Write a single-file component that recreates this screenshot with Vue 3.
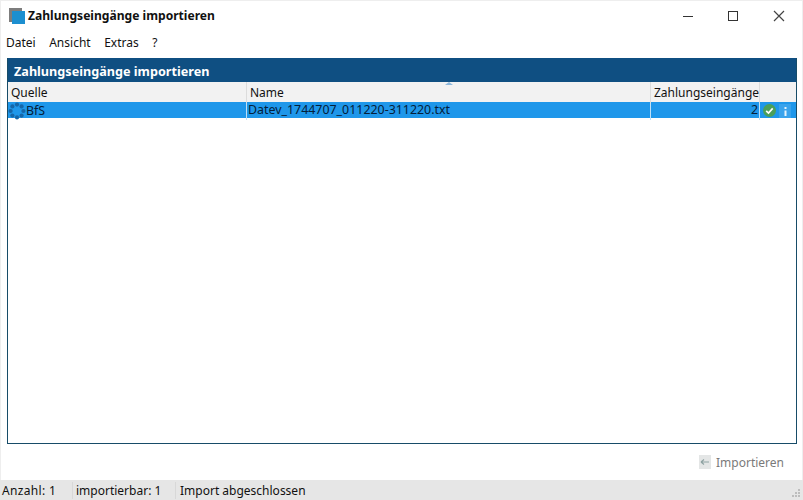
<template>
  <div class="win">
    <header class="titlebar">
      <svg class="appicon" width="17" height="17" viewBox="0 0 17 17">
        <path d="M0 0h13v3H3v11H0z" fill="#7d7d7d" />
        <rect x="3" y="3" width="13" height="13" fill="#1c8fd0" />
      </svg>
      <span class="title">Zahlungseingänge importieren</span>
      <div class="winbtns">
        <svg width="12" height="12" viewBox="0 0 12 12"><path d="M1 6.5h10" stroke="#333" fill="none" /></svg>
        <svg width="12" height="12" viewBox="0 0 12 12"><rect x="1.5" y="1.5" width="9" height="9" stroke="#333" fill="none" /></svg>
        <svg class="close" width="12" height="12" viewBox="0 0 12 12"><path d="M1 1l10 10M11 1L1 11" stroke="#444" stroke-width="1.2" fill="none" /></svg>
      </div>
    </header>
    <nav class="menu">
      <span v-for="m in menus" :key="m">{{ m }}</span>
    </nav>
    <section class="panel">
      <div class="panelhead">Zahlungseingänge importieren</div>
      <div class="colhead rowgrid">
        <div class="c">Quelle</div>
        <div class="c name">Name<i class="sort"></i></div>
        <div class="c">Zahlungseingänge</div>
        <div class="c"></div>
      </div>
      <div class="datarow rowgrid">
        <div class="c src">
          <svg width="18" height="18" viewBox="0 0 18 18" class="logo">
            <g fill="#1566a8">
              <circle v-for="d in dots" :key="d.x + '-' + d.y" :cx="d.x" :cy="d.y" :r="d.r" />
            </g>
          </svg>
          BfS
        </div>
        <div class="c">Datev_1744707_011220-311220.txt</div>
        <div class="c num">2</div>
        <div class="c icons">
          <svg class="check" width="13" height="13" viewBox="0 0 13 13">
            <circle cx="6.5" cy="6.5" r="6.5" fill="#4a9f5a" />
            <path d="M3.2 6.8l2.3 2.2 4.2-4.6" stroke="#fff" stroke-width="1.7" fill="none" />
          </svg>
          <span class="infobox">
            <svg width="5" height="9" viewBox="0 0 5 9">
              <path d="M1.5 0h2v2h-2zM1.5 3.5h2V9h-2z" fill="#e6f3fb" />
            </svg>
          </span>
        </div>
      </div>
    </section>
    <div class="actions">
      <button class="import" disabled>
        <svg width="12" height="14" viewBox="0 0 12 14">
          <rect width="12" height="14" fill="#e4e6e6" />
          <path d="M2 7h8M2 7l3-2.5M2 7l3 2.5" stroke="#8fa3a3" stroke-width="1.2" fill="none" />
        </svg>
        Importieren
      </button>
    </div>
    <footer class="status">
      <span class="s1">Anzahl: 1</span>
      <span class="s2">importierbar: 1</span>
      <span class="s3">Import abgeschlossen</span>
      <svg class="grip" width="10" height="10" viewBox="0 0 10 10">
        <g fill="#bdbdbd">
          <rect x="7" y="1" width="2" height="2" />
          <rect x="4" y="4" width="2" height="2" /><rect x="7" y="4" width="2" height="2" />
          <rect x="1" y="7" width="2" height="2" /><rect x="4" y="7" width="2" height="2" /><rect x="7" y="7" width="2" height="2" />
        </g>
      </svg>
    </footer>
  </div>
</template>

<script setup>
const menus = ['Datei', 'Ansicht', 'Extras', '?']
const dots = [
  { x: 9, y: 2.6, r: 2.1 }, { x: 9, y: 15.4, r: 2.1 },
  { x: 2.6, y: 9, r: 2.1 }, { x: 15.4, y: 9, r: 2.1 },
  { x: 4.4, y: 4.4, r: 2.1 }, { x: 13.6, y: 4.4, r: 2.1 },
  { x: 4.4, y: 13.6, r: 2.1 }, { x: 13.6, y: 13.6, r: 2.1 }
]
</script>

<style>
html, body { margin: 0; background: #fff; }
</style>

<style scoped>
.win {
  width: 803px;
  height: 500px;
  display: flex;
  flex-direction: column;
  background: #fff;
  font-family: "Noto Sans", "Liberation Sans", sans-serif;
  font-size: 12px;
  color: #111;
  overflow: hidden;
  box-shadow: inset 1px 1px 0 #eee, inset -1px 0 0 #eee;
}
.titlebar {
  height: 32px;
  display: flex;
  align-items: center;
  padding-left: 9px;
  flex: none;
}
.appicon { margin-right: 2px; }
.title { font-weight: 700; font-size: 12.1px; color: #111; line-height: 32px; height: 32px; }
.winbtns {
  margin-left: auto;
  display: flex;
  gap: 33px;
  padding-right: 18px;
}
.close { margin-left: 1px; }
.menu {
  height: 20px;
  margin-bottom: 6px;
  display: flex;
  align-items: center;
  gap: 13.5px;
  padding-left: 6px;
  flex: none;
}
.panel {
  margin: 0 6px 0 7px;
  height: 386px;
  flex: none;
  border: 1px solid #174c68;
  border-top: 0;
  box-sizing: border-box;
  display: flex;
  flex-direction: column;
}
.panelhead {
  height: 24px;
  line-height: 27px;
  background: #0f4f82;
  color: #fff;
  font-weight: 700;
  font-size: 12.65px;
  padding-left: 6px;
  flex: none;
}
.rowgrid {
  display: grid;
  grid-template-columns: 239px 404px 109px 1fr;
}
.colhead {
  height: 20px;
  background: #f2f2f2;
  flex: none;
}
.colhead .c {
  border-right: 1px solid #dcdcdc;
  line-height: 21px;
  padding-left: 3px;
  position: relative;
}
.colhead .c:last-child { border-right: 0; }
.sort {
  position: absolute;
  left: 198px;
  top: 0;
  width: 0;
  height: 0;
  border-left: 4px solid transparent;
  border-right: 4px solid transparent;
  border-bottom: 3px solid #8db8dc;
}
.datarow {
  height: 16px;
  background: #1f97ea;
  color: #04203a;
  flex: none;
  font-size: 12.4px;
}
.datarow .c {
  line-height: 16px;
  padding-left: 1px;
  border-right: 1px solid #bfe0f7;
  white-space: nowrap;
}
.datarow .c:last-child { border-right: 0; }
.src {
  display: flex;
  align-items: center;
  overflow: visible;
}
.logo { margin-left: -1px; flex: none; }
.num { text-align: right; padding-right: 1px; }
.icons {
  display: flex;
  align-items: center;
  gap: 3px;
  padding-left: 3px !important;
}
.check { margin-bottom: 2px; }
.infobox {
  width: 12px;
  height: 14px;
  background: #3aa3ec;
  display: flex;
  align-items: center;
  justify-content: center;
}
.actions {
  flex: 1;
  display: flex;
  justify-content: flex-end;
  align-items: center;
  padding-right: 19px;
}
.import {
  display: flex;
  align-items: center;
  gap: 5px;
  border: 0;
  background: none;
  padding: 0;
  font: inherit;
  color: #7a7a7a;
}
.status {
  height: 20px;
  background: #e6e6e6;
  display: flex;
  align-items: center;
  flex: none;
  padding-left: 2px;
  position: relative;
}
.status span { white-space: nowrap; }
.s1 { width: 70px; letter-spacing: 0.35px; }
.s2 { width: 103px; padding-left: 3px; border-left: 1px solid #d8d8d8; box-sizing: border-box; }
.s3 { padding-left: 4px; border-left: 1px solid #d8d8d8; }
.grip { position: absolute; right: 2px; bottom: 2px; }
</style>
